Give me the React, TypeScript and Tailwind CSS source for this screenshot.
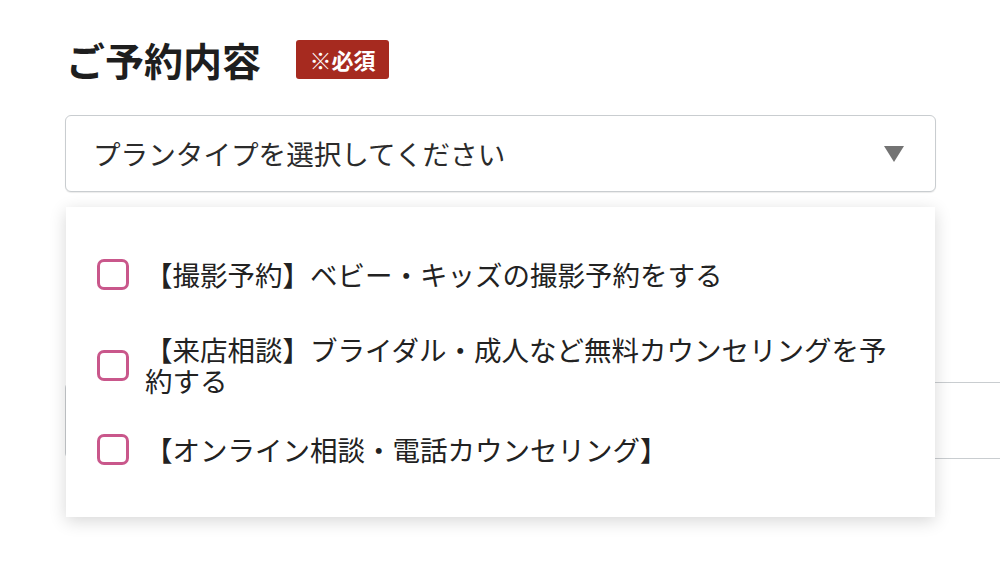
import React from "react";

const items: { label: string; mt: string }[] = [
  { label: "【撮影予約】ベビー・キッズの撮影予約をする", mt: "mt-0" },
  { label: "【来店相談】ブライダル・成人など無料カウンセリングを予約する", mt: "mt-[44px]" },
  { label: "【オンライン相談・電話カウンセリング】", mt: "mt-[38px]" },
];

export default function App() {
  return (
    <div
      className="relative w-[1000px] h-[569px] overflow-hidden bg-white text-[#222]"
      style={{ fontFamily: '"Noto Sans CJK JP", "Noto Sans", sans-serif' }}
    >
      <div className="pl-[65px] pt-[39px]">
        <div className="flex items-center h-[40px]">
          <h1 className="pl-[1px] text-[39px] leading-[40px] font-bold text-[#1e1e1e]">ご予約内容</h1>
          <span className="ml-[35px] flex items-center justify-center h-[39px] w-[93px] rounded-[3px] bg-[#a62a1f] text-white text-[22px] font-bold leading-none">
            ※必須
          </span>
        </div>

        <div className="mt-[36px] w-[871px] h-[77px] rounded-[6px] border border-[#c9cdd0] bg-white flex items-center justify-between pl-[27px] pr-[31px] shadow-[0_1px_1px_rgba(0,0,0,0.08)]">
          <span className="text-[27.6px] leading-none text-[#2b2b2b]">プランタイプを選択してください</span>
          <svg width="20" height="16" viewBox="0 0 20 16" className="mt-[1px]">
            <polygon points="0,0 20,0 10,16" fill="#737373" />
          </svg>
        </div>

        <div className="mt-[190px] w-[1000px] h-[77px] rounded-[6px] border border-[#c9cdd0] bg-white" />
      </div>

      <div className="absolute left-[66px] top-[207px] w-[869px] h-[310px] bg-white shadow-[0_4px_16px_rgba(0,0,0,0.16)] pl-[31px] pr-[30px] pt-[52px]">
        {items.map((it) => (
          <div key={it.label} className={`flex items-center ${it.mt}`}>
            <span className="shrink-0 w-[32px] h-[31px] rounded-[7px] border-[3px] border-[#c9578b] bg-white" />
            <span className="ml-[16px] text-[27.5px] leading-[31px] text-[#222]">{it.label}</span>
          </div>
        ))}
      </div>
    </div>
  );
}
